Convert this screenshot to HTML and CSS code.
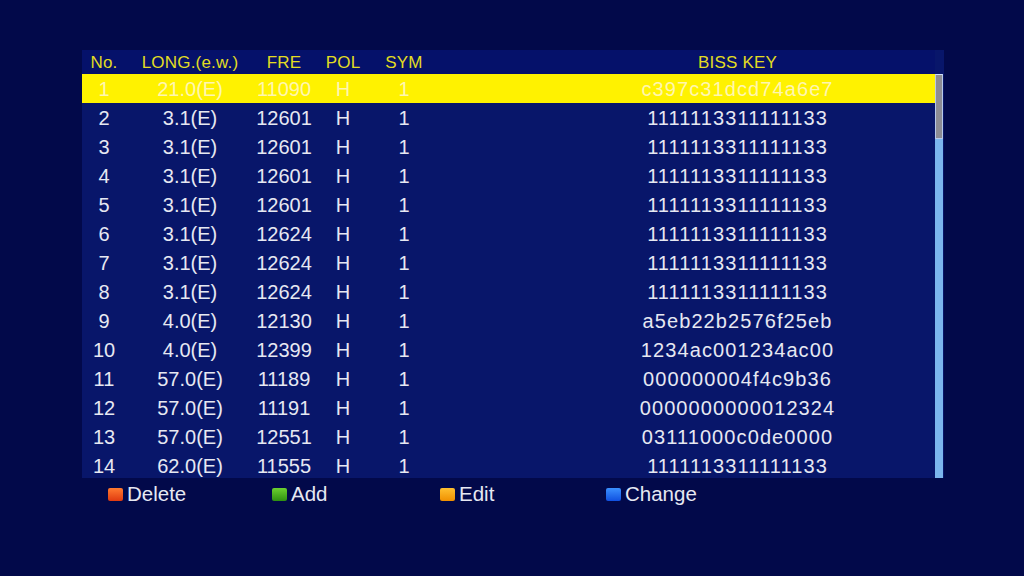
FILE: index.html
```html
<!DOCTYPE html>
<html>
<head>
<meta charset="utf-8">
<link rel="stylesheet" href="styles.css">
</head>
<body>
<div class="screen">
  <div class="panel">
    <div class="row head">
      <span>No.</span><span>LONG.(e.w.)</span><span>FRE</span><span>POL</span><span>SYM</span><span class="key">BISS KEY</span>
    </div>
    <div class="body">
      <div class="list">
        <div class="row sel"><span>1</span><span>21.0(E)</span><span>11090</span><span>H</span><span>1</span><span class="key">c397c31dcd74a6e7</span></div>
        <div class="row"><span>2</span><span>3.1(E)</span><span>12601</span><span>H</span><span>1</span><span class="key">1111113311111133</span></div>
        <div class="row"><span>3</span><span>3.1(E)</span><span>12601</span><span>H</span><span>1</span><span class="key">1111113311111133</span></div>
        <div class="row"><span>4</span><span>3.1(E)</span><span>12601</span><span>H</span><span>1</span><span class="key">1111113311111133</span></div>
        <div class="row"><span>5</span><span>3.1(E)</span><span>12601</span><span>H</span><span>1</span><span class="key">1111113311111133</span></div>
        <div class="row"><span>6</span><span>3.1(E)</span><span>12624</span><span>H</span><span>1</span><span class="key">1111113311111133</span></div>
        <div class="row"><span>7</span><span>3.1(E)</span><span>12624</span><span>H</span><span>1</span><span class="key">1111113311111133</span></div>
        <div class="row"><span>8</span><span>3.1(E)</span><span>12624</span><span>H</span><span>1</span><span class="key">1111113311111133</span></div>
        <div class="row"><span>9</span><span>4.0(E)</span><span>12130</span><span>H</span><span>1</span><span class="key">a5eb22b2576f25eb</span></div>
        <div class="row"><span>10</span><span>4.0(E)</span><span>12399</span><span>H</span><span>1</span><span class="key">1234ac001234ac00</span></div>
        <div class="row"><span>11</span><span>57.0(E)</span><span>11189</span><span>H</span><span>1</span><span class="key">000000004f4c9b36</span></div>
        <div class="row"><span>12</span><span>57.0(E)</span><span>11191</span><span>H</span><span>1</span><span class="key">0000000000012324</span></div>
        <div class="row"><span>13</span><span>57.0(E)</span><span>12551</span><span>H</span><span>1</span><span class="key">03111000c0de0000</span></div>
        <div class="row"><span>14</span><span>62.0(E)</span><span>11555</span><span>H</span><span>1</span><span class="key">1111113311111133</span></div>
      </div>
      <div class="scroll"><div class="thumb"></div></div>
    </div>
  </div>
  <div class="footer">
    <div class="btn"><i class="dot red"></i>Delete</div>
    <div class="btn"><i class="dot green"></i>Add</div>
    <div class="btn"><i class="dot yellow"></i>Edit</div>
    <div class="btn"><i class="dot blue"></i>Change</div>
  </div>
</div>
</body>
</html>
```
FILE: styles.css
```css
html, body {
  margin: 0;
  padding: 0;
}
body {
  width: 1024px;
  height: 576px;
  background: #02094a;
  font-family: "Liberation Sans", Arial, sans-serif;
  overflow: hidden;
}
.screen {
  padding: 50px 0 0 82px;
}
.panel {
  width: 862px;
  background: #08166a;
}
.row {
  display: grid;
  grid-template-columns: 44px 128px 60px 58px 64px 1fr;
  height: 29px;
  align-items: center;
  font-size: 20px;
  color: #e6e8f2;
  text-align: center;
  white-space: nowrap;
  padding-top: 1px;
  box-sizing: border-box;
}
.row .key {
  padding-left: 104px;
  letter-spacing: 1.1px;
}
.row.head {
  height: 24px;
  font-size: 17px;
  letter-spacing: 0.2px;
  color: #e2dc22;
  width: 853px;
  background: #05116a;
}
.row.head .key {
  letter-spacing: 0.2px;
}
.row.sel {
  background: #fff200;
  color: #fff6b0;
}
.body {
  display: flex;
  height: 404px;
  overflow: hidden;
}
.list {
  width: 853px;
}
.scroll {
  width: 8px;
  height: 404px;
  background: #7cb6ee;
  box-sizing: border-box;
}
.thumb {
  height: 65px;
  background: #8c8c94;
  border: 1px solid #b8c8e8;
  border-top-color: #d0e0f8;
  box-sizing: border-box;
}
.footer {
  display: flex;
  padding-left: 26px;
  height: 32px;
  align-items: center;
}
.btn {
  width: 166px;
  display: flex;
  align-items: center;
  font-size: 20.5px;
  color: #e6e8f2;
}
.btn:nth-child(1) { width: 164px; }
.btn:nth-child(2) { width: 168px; }
.dot {
  display: block;
  width: 15px;
  height: 13px;
  border-radius: 2px;
  margin-right: 4px;
}
.red { background: linear-gradient(#ff7a30, #e03a10); }
.green { background: linear-gradient(#6cd030, #2e9010); }
.yellow { background: linear-gradient(#ffc030, #f09000); }
.blue { background: linear-gradient(#3a90ff, #1050e0); }
```
